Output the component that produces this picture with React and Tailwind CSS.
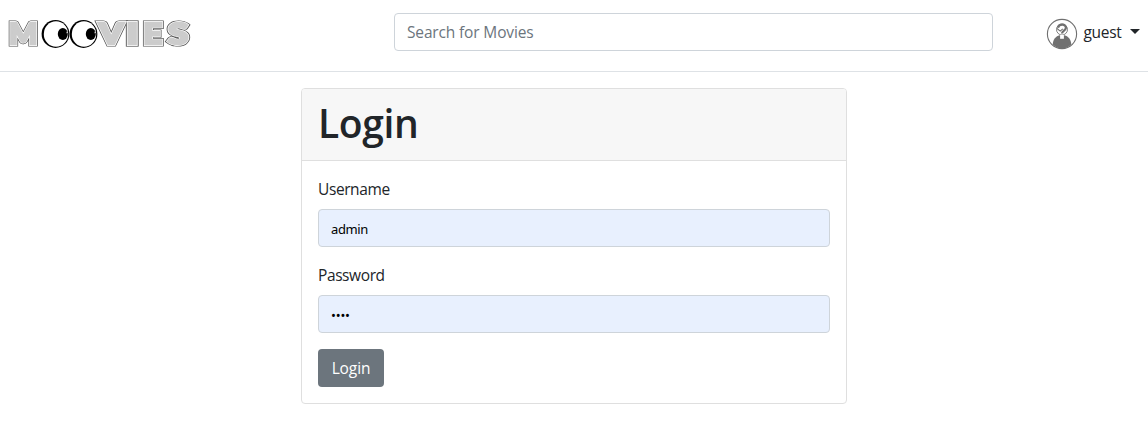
const glyphs = [
  { c: "M", x: 9.2, w: 28 },
  { c: "V", x: 99.3, w: 24 },
  { c: "I", x: 126.6, w: 11.5 },
  { c: "E", x: 143.6, w: 18.4 },
  { c: "S", x: 168.2, w: 19.8 },
];

const layers = [
  { stroke: "#505050", width: 5.2 },
  { stroke: "#ffffff", width: 3.8 },
  { stroke: "#cccccc", width: 2.6 },
];

function Logo() {
  return (
    <svg className="opacity-[0.999] will-change-transform" width="192" height="40" viewBox="0 14 192 40" role="img" aria-label="Moovies">
      {layers.map((l) =>
        glyphs.map((g) => (
          <text
            key={l.stroke + g.c}
            x={g.x}
            y="44"
            textLength={g.w}
            lengthAdjust="spacingAndGlyphs"
            fontFamily="Lato, sans-serif"
            fontWeight="900"
            fontSize="28"
            fill="#cccccc"
            stroke={l.stroke}
            strokeWidth={l.width}
            strokeMiterlimit="3"
          >
            {g.c}
          </text>
        ))
      )}
      {[55.5, 83.5].map((cx) => (
        <g key={cx}>
          <circle cx={cx} cy="34" r="13.9" fill="#000" />
          <ellipse cx={cx + 0.5} cy="34" rx="12.2" ry="12.8" fill="#fff" />
          <ellipse cx={cx + 7.3} cy="34" rx="5" ry="6" fill="#000" />
          <path d={`M${cx + 11} 31.500l1.500 1-1.300 1z`} fill="#fff" />
        </g>
      ))}
    </svg>
  );
}

function Avatar() {
  return (
    <svg width="32" height="32" viewBox="0 0 32 32" fill="none">
      <circle cx="16" cy="16" r="14.6" stroke="#707070" strokeWidth="1.1" />
      <path d="M6.700 26.500C7 21.500 10 18 13.500 17.200h5c3.500.8 6.500 4.300 6.800 9.300C20 31.800 12 31.800 6.700 26.500Z" fill="#707070" />
      <circle cx="16" cy="11.500" r="5.500" fill="#fff" stroke="#707070" strokeWidth=".9" />
      <path d="M12 9.800c.8-4.300 8.300-4 7.900.2-.2 2.600-3.900 2.800-3.900 5.600" stroke="#707070" strokeWidth="2.300" />
      <path d="m11 10.500 3.200 2.600 2.600-2.300" stroke="#707070" strokeWidth="1.100" />
      <path d="M14.100 16.800h3.800v4h-3.800z" fill="#fff" />
    </svg>
  );
}

export default function App() {
  return (
    <div className="min-h-[424px] bg-white font-['Open_Sans','Noto_Sans',sans-serif] text-base text-[#212529]">
      <header className="flex h-[72px] items-start border-b border-[#dee2e6]">
        <div className="mt-[14px] w-[394px]">
          <Logo />
        </div>
        <input
          className="mt-[13px] h-[38px] w-[599px] rounded border border-[#ced4da] px-3 text-[15.5px] tracking-[-0.15px] outline-none placeholder:text-[#6c757d]"
          placeholder="Search for Movies"
        />
        <button className="mt-[18px] ml-[53px] flex h-8 items-center">
          <Avatar />
          <span className="ml-[5px] w-[39px] pb-[2px] text-[15.5px] tracking-[-0.3px]">guest</span>
          <span className="mb-[5px] ml-2 border-x-[5px] border-t-[5px] border-x-transparent border-t-[#212529]" />
        </button>
      </header>
      <main className="mt-4 ml-[301px] h-[316px] w-[546px] rounded border border-[#dfdfdf]">
        <h1 className="h-[72px] rounded-t-[3px] border-b border-[#dfdfdf] bg-[#f7f7f7] px-4 pt-[10px] text-[39px] leading-[48px] font-semibold tracking-[-0.4px]">
          Login
        </h1>
        <form className="flex flex-col items-start px-4 pt-4" onSubmit={(e) => e.preventDefault()}>
          <label className="mb-2 text-[15.5px] leading-6 tracking-[-0.4px]" htmlFor="username">
            Username
          </label>
          <input
            id="username"
            defaultValue="admin"
            className="mb-4 h-[38px] w-full rounded border border-[#ced4da] bg-[#e8f0fe] px-3 pt-[1px] font-['Noto_Sans',sans-serif] text-[13px] tracking-[-0.4px] text-black outline-none"
          />
          <label className="mb-2 text-[15.5px] leading-6 tracking-[-0.4px]" htmlFor="password">
            Password
          </label>
          <input
            id="password"
            type="password"
            defaultValue="pass"
            className="mb-4 h-[38px] w-full rounded border border-[#ced4da] bg-[#e8f0fe] px-3 pt-[1px] font-['Noto_Sans',sans-serif] text-[13px] tracking-[-0.2px] text-black outline-none"
          />
          <button className="h-[38px] w-[66px] rounded bg-[#6c757d] pt-[1px] text-[15.5px] tracking-[-0.1px] text-white">
            Login
          </button>
        </form>
      </main>
    </div>
  );
}
